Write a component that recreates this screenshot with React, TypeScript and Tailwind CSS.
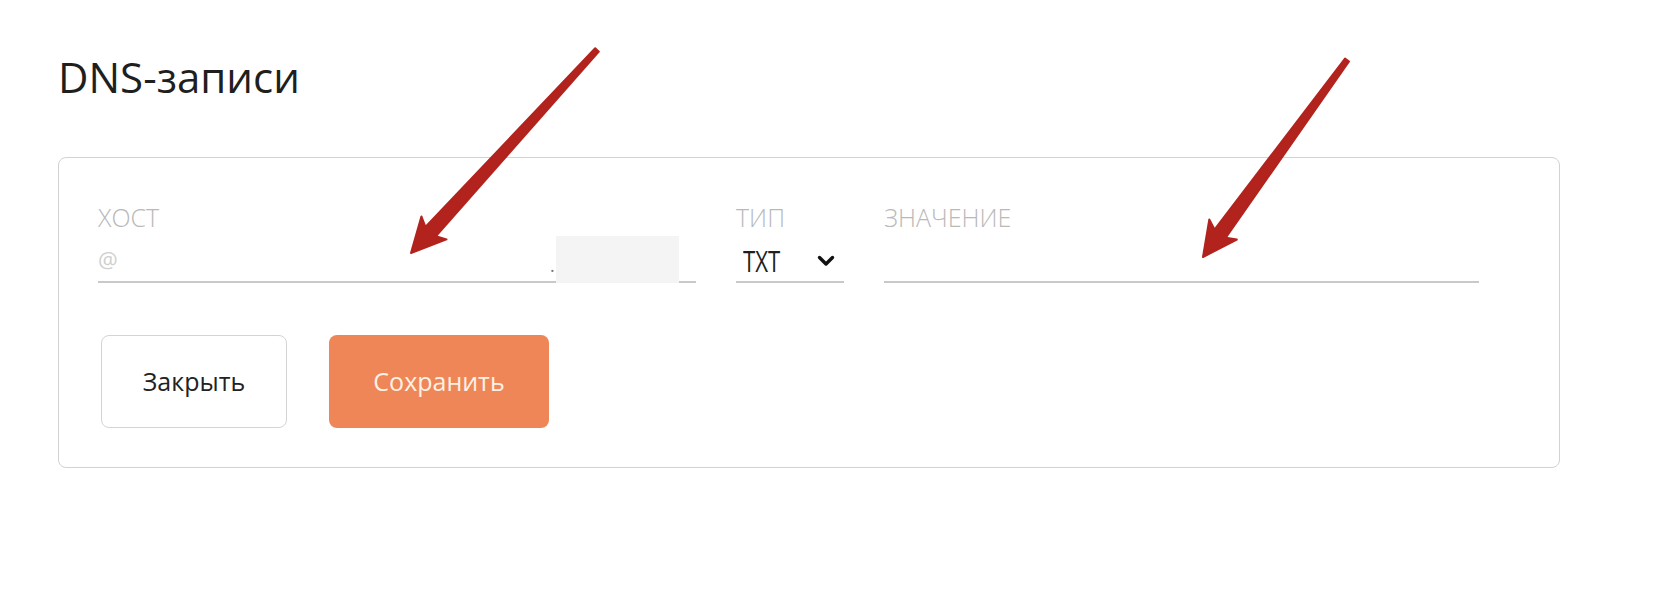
import React from 'react';

type Pt = [number, number];

// tapered arrow polygon from tail to tip
function arrowPoints(tail: Pt, tip: Pt, headLen = 34, headHalf = 17, tailHalf = 2.5, neckHalf = 7) {
  const dx = tip[0] - tail[0];
  const dy = tip[1] - tail[1];
  const len = Math.hypot(dx, dy);
  const u: Pt = [dx / len, dy / len];
  const n: Pt = [u[1], -u[0]];
  const base: Pt = [tip[0] - headLen * u[0], tip[1] - headLen * u[1]];
  const neck: Pt = [tip[0] - (headLen - 5) * u[0], tip[1] - (headLen - 5) * u[1]];
  const p = (c: Pt, k: number): string => `${(c[0] + k * n[0]).toFixed(1)},${(c[1] + k * n[1]).toFixed(1)}`;
  return [
    p(tail, tailHalf),
    p(neck, neckHalf),
    p(base, headHalf),
    `${tip[0]},${tip[1]}`,
    p(base, -headHalf),
    p(neck, -neckHalf),
    p(tail, -tailHalf),
  ].join(' ');
}

function Arrows() {
  return (
    <svg className="pointer-events-none absolute inset-0" width="1680" height="601" viewBox="0 0 1680 601">
      <polygon points={arrowPoints([597, 50], [411, 253])} fill="#b2231e" stroke="#b2231e" strokeWidth="2" strokeLinejoin="round" />
      <polygon points={arrowPoints([1347, 60], [1203, 257])} fill="#b2231e" stroke="#b2231e" strokeWidth="2" strokeLinejoin="round" />
    </svg>
  );
}

function Label({ children }: { children: React.ReactNode }) {
  return <div className="h-[30px] text-[25px] leading-[30px] font-light text-[#b9b9b9]">{children}</div>;
}

export default function App() {
  return (
    <div
      className="relative h-[601px] w-[1680px] overflow-hidden bg-white"
      style={{ fontFamily: '"Open Sans", "Noto Sans", sans-serif' }}
    >
      <div className="pl-[58px] pt-[52px]">
        <h1 className="text-[42px] leading-[50px] font-normal text-[#1f1f1f]">DNS-записи</h1>

        {/* Record form */}
        <div className="mt-[55px] w-[1502px] rounded-[8px] border-[1.5px] border-[#d2d2d2] pl-[39px] pt-[44px] pb-[39px]">
          <div className="flex gap-[40px]">
            {/* Host */}
            <div className="w-[598px]">
              <Label>ХОСТ</Label>
              <div className="flex h-[51px] items-end border-b-2 border-[#c9c9c9]">
                <input
                  placeholder="@"
                  className="mb-[7px] w-[440px] bg-transparent text-[22px] leading-[30px] text-[#333] outline-none placeholder:text-[#cfcfcf]"
                />
                <span className="mb-[6px] ml-[12px] text-[18px] leading-[20px] text-[#777]">.</span>
                <div className="-mb-[2px] ml-[1px] h-[47px] w-[123px] bg-[#f4f4f4]" />
              </div>
            </div>

            {/* Type */}
            <div className="w-[108px]">
              <Label>ТИП</Label>
              <div className="flex h-[51px] items-end border-b-2 border-[#c9c9c9] pl-[7px]">
                <span className="mb-[5px] w-[46px] shrink-0 overflow-visible whitespace-nowrap text-[30px] leading-[30px] text-[#1f1f1f]">
                  <span className="inline-block origin-left scale-x-[0.74]">TXT</span>
                </span>
                <svg className="mb-[14px] ml-[28px] shrink-0" width="18" height="12" viewBox="0 0 18 12">
                  <path d="M2.5 2.5L9 9l6.5-6.5" fill="none" stroke="#111" strokeWidth="3.4" strokeLinecap="round" strokeLinejoin="round" />
                </svg>
              </div>
            </div>

            {/* Value */}
            <div className="w-[595px]">
              <Label>ЗНАЧЕНИЕ</Label>
              <div className="h-[51px] border-b-2 border-[#c9c9c9]" />
            </div>
          </div>

          <div className="ml-[3px] mt-[52px] flex gap-[42px]">
            <button className="h-[93px] w-[186px] rounded-[8px] border-[1.5px] border-[#d4d4d4] bg-white text-[25px] text-[#222]">
              Закрыть
            </button>
            <button className="h-[93px] w-[220px] rounded-[8px] bg-[#ee8658] text-[25px] text-[#fdf1e4]">
              Сохранить
            </button>
          </div>
        </div>
      </div>

      <Arrows />
    </div>
  );
}
